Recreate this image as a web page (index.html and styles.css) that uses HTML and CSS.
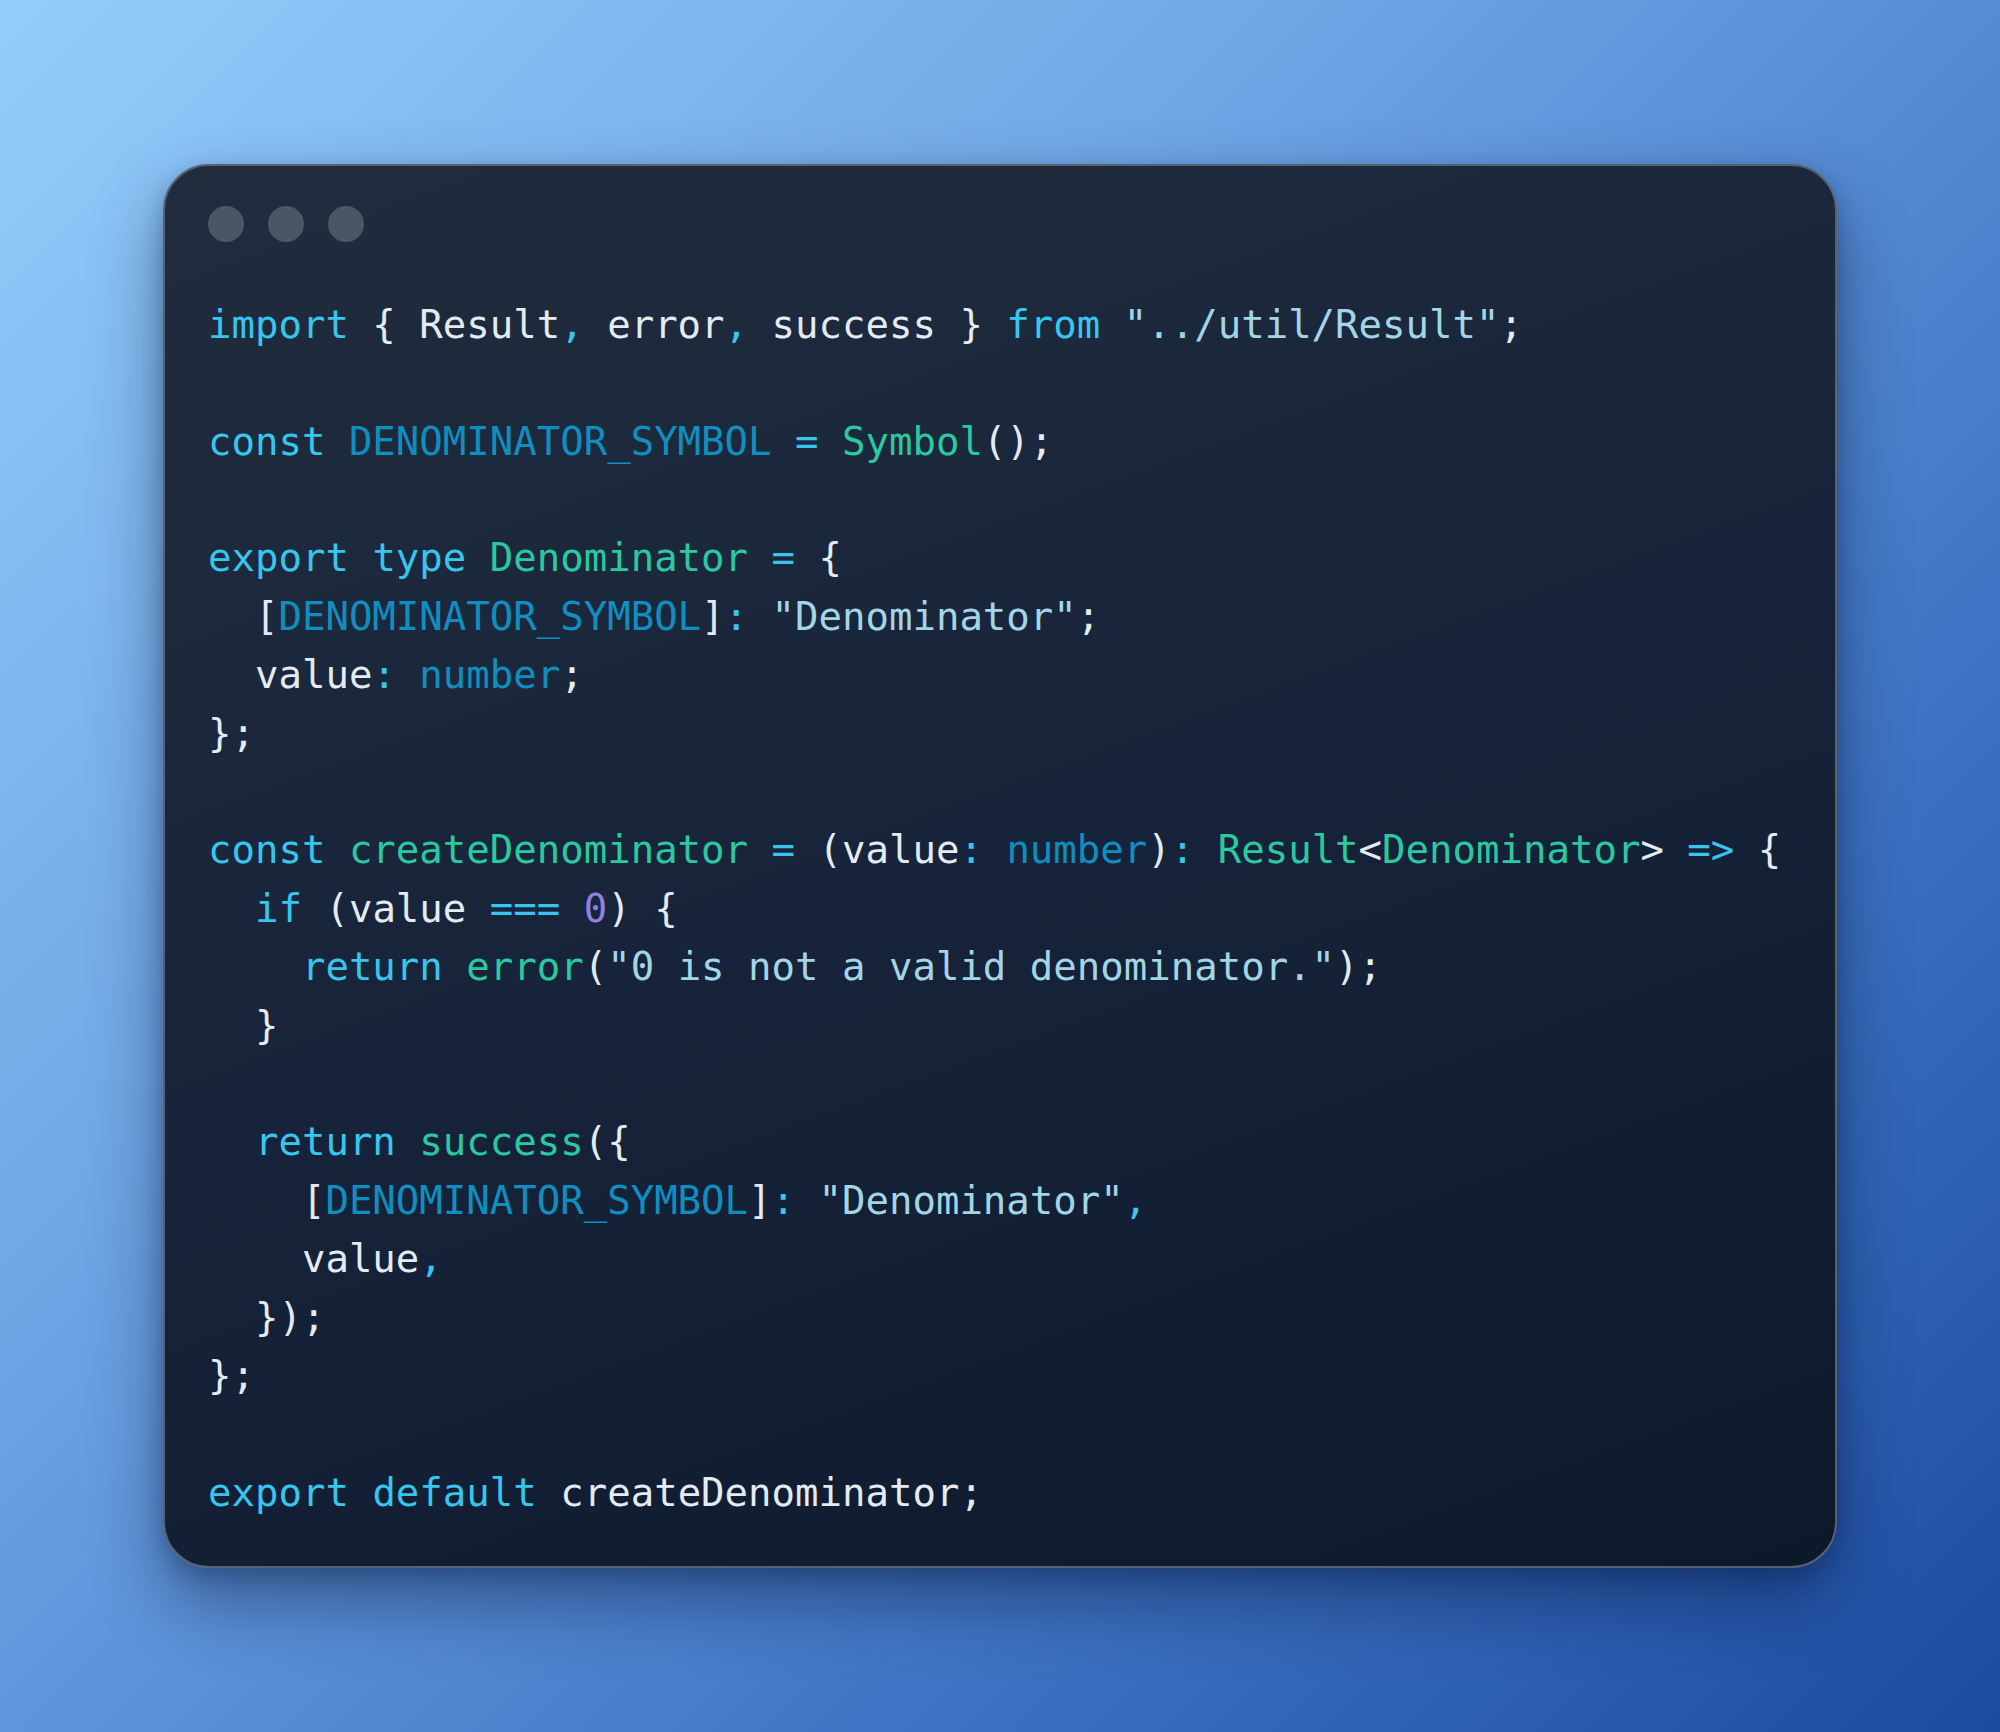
FILE: index.html
```html
<!DOCTYPE html>
<html lang="en">
<head>
<meta charset="utf-8">
<title>Code snippet</title>
<link rel="stylesheet" href="styles.css">
</head>
<body>
<main class="stage">
  <section class="window">
    <div class="dots"><span class="dot"></span><span class="dot"></span><span class="dot"></span></div>
<pre class="code"><code><span class="kw">import</span> { Result<span class="op">,</span> error<span class="op">,</span> success } <span class="kw">from</span> <span class="str">"../util/Result"</span>;

<span class="kw">const</span> <span class="const">DENOMINATOR_SYMBOL</span> <span class="op">=</span> <span class="fn">Symbol</span>();

<span class="kw">export</span> <span class="kw">type</span> <span class="fn">Denominator</span> <span class="op">=</span> {
  [<span class="const">DENOMINATOR_SYMBOL</span>]<span class="op">:</span> <span class="str">"Denominator"</span>;
  value<span class="op">:</span> <span class="const">number</span>;
};

<span class="kw">const</span> <span class="fn">createDenominator</span> <span class="op">=</span> (value<span class="op">:</span> <span class="const">number</span>)<span class="op">:</span> <span class="fn">Result</span>&lt;<span class="fn">Denominator</span>&gt; <span class="op">=&gt;</span> {
  <span class="kw">if</span> (value <span class="op">===</span> <span class="num">0</span>) {
    <span class="kw">return</span> <span class="fn">error</span>(<span class="str">"0 is not a valid denominator."</span>);
  }

  <span class="kw">return</span> <span class="fn">success</span>({
    [<span class="const">DENOMINATOR_SYMBOL</span>]<span class="op">:</span> <span class="str">"Denominator"</span><span class="op">,</span>
    value<span class="op">,</span>
  });
};

<span class="kw">export</span> <span class="kw">default</span> createDenominator;</code></pre>
  </section>
</main>
</body>
</html>
```

FILE: styles.css
```css
html, body {
  margin: 0;
  padding: 0;
}

body {
  width: 2000px;
  height: 1732px;
  background: linear-gradient(135deg, #94cdfb 0%, #6fa6e6 35%, #3f74c4 70%, #1b4a9f 100%);
  overflow: hidden;
}

.stage {
  width: 2000px;
  height: 1732px;
  display: flex;
  align-items: center;
  justify-content: center;
}

.window {
  box-sizing: border-box;
  width: 1674px;
  padding: 40px 43px 44px 43px;
  border: 2px solid #576171;
  border-radius: 46px;
  background: linear-gradient(160deg, #212d3d 0%, #17233a 50%, #0c192b 100%);
  box-shadow: 0 34px 70px rgba(8, 24, 60, 0.45), 0 8px 20px rgba(8, 24, 60, 0.25);
}

.dots {
  display: flex;
  gap: 24px;
  height: 36px;
}

.dot {
  width: 36px;
  height: 36px;
  border-radius: 50%;
  background: #4c5563;
}

.code {
  margin: 54px 0 0 0;
  font-family: "DejaVu Sans Mono", "Liberation Mono", monospace;
  font-size: 39px;
  line-height: 58.4px;
  color: #e3ebf3;
  white-space: pre;
}

.code code {
  font-family: inherit;
}

.kw { color: #36c6ee; }
.op { color: #36c6ee; }
.str { color: #a2d6e6; }
.const { color: #0f8fc0; }
.fn { color: #2ac9a1; }
.num { color: #8f80e2; }
```
